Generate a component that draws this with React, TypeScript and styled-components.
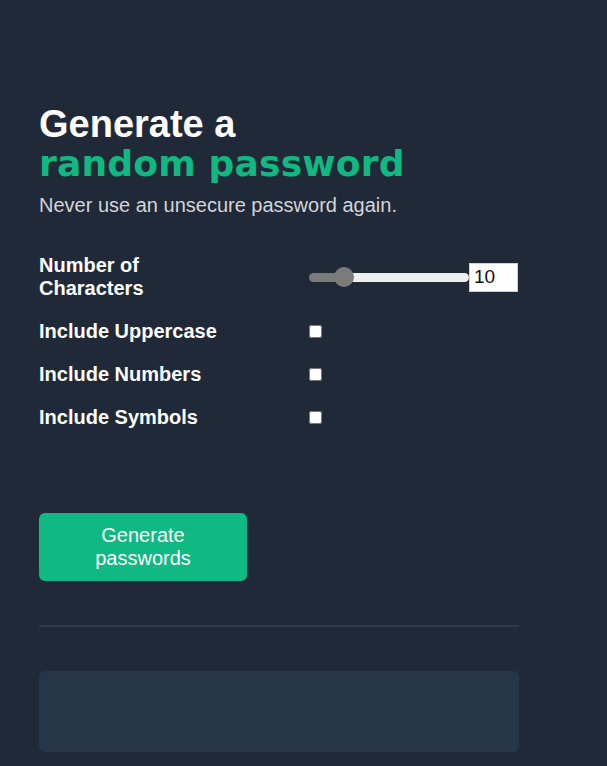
import { useState } from "react";
import styled, { createGlobalStyle } from "styled-components";

const GlobalStyle = createGlobalStyle`
  html, body {
    margin: 0;
    padding: 0;
    background: #1f2937;
  }

  body {
    font-family: "Liberation Sans", Arial, sans-serif;
    color: #ffffff;
  }
`;

const Page = styled.main`
  min-height: 766px;
  box-sizing: border-box;
  padding: 104px 0 0 39px;
  width: 519px;
`;

const Title = styled.h1`
  margin: 0;
  font-size: 38px;
  line-height: 40px;
  font-weight: 700;
  color: #ffffff;
`;

const Accent = styled.span`
  display: block;
  color: #10b981;
  font-family: "DejaVu Sans", Verdana, sans-serif;
  font-size: 36px;
  letter-spacing: 0.2px;
`;

const Subtitle = styled.p`
  margin: 9px 0 0;
  font-size: 20px;
  line-height: 24px;
  color: #d5d4d8;
`;

const Options = styled.div`
  margin-top: 37px;
  display: flex;
  flex-direction: column;
  gap: 20px;
`;

const OptionRow = styled.label`
  display: grid;
  grid-template-columns: 270px 1fr;
  align-items: center;
  min-height: 23px;
`;

const OptionLabel = styled.span<{ $narrow?: boolean }>`
  font-size: 20px;
  font-weight: 700;
  line-height: 23px;
  max-width: ${({ $narrow }) => ($narrow ? "130px" : "none")};
`;

const SliderGroup = styled.div`
  display: flex;
  align-items: center;
`;

const Range = styled.input`
  -webkit-appearance: none;
  appearance: none;
  width: 160px;
  height: 9px;
  margin: 0;
  border-radius: 5px;
  outline: none;

  &::-webkit-slider-thumb {
    -webkit-appearance: none;
    width: 20px;
    height: 20px;
    border-radius: 50%;
    background: #7b7b7b;
    cursor: pointer;
  }
`;

const NumberBox = styled.input`
  width: 49px;
  height: 29px;
  box-sizing: border-box;
  border: 1px solid #cfcfcf;
  background: #ffffff;
  color: #111111;
  font-family: "Liberation Sans", Arial, sans-serif;
  font-size: 19px;
  padding: 0 4px;
  margin: 0;
  outline: none;
  -moz-appearance: textfield;

  &::-webkit-inner-spin-button,
  &::-webkit-outer-spin-button {
    -webkit-appearance: none;
    margin: 0;
  }
`;

const Check = styled.input`
  width: 13px;
  height: 13px;
  margin: 0;
`;

const GenerateButton = styled.button`
  margin-top: 84px;
  width: 208px;
  height: 68px;
  border: none;
  border-radius: 6px;
  background: #10b981;
  color: #ffffff;
  font-family: "Liberation Sans", Arial, sans-serif;
  font-size: 20px;
  line-height: 23px;
  padding: 0 50px;
  cursor: pointer;
`;

const Divider = styled.hr`
  margin: 44px 0 0;
  border: none;
  height: 2px;
  background: #2f3a4a;
`;

const Output = styled.div`
  margin-top: 44px;
  height: 81px;
  border-radius: 6px;
  background: #273549;
`;

const MIN = 8;
const MAX = 19;

export default function App() {
  const [length, setLength] = useState(10);
  const [upper, setUpper] = useState(false);
  const [numbers, setNumbers] = useState(false);
  const [symbols, setSymbols] = useState(false);

  const pct = ((length - MIN) / (MAX - MIN)) * 100;

  return (
    <>
      <GlobalStyle />
      <Page>
        <Title>
          Generate a
          <Accent>random password</Accent>
        </Title>
        <Subtitle>Never use an unsecure password again.</Subtitle>

        <Options>
          <OptionRow as="div">
            <OptionLabel $narrow>Number of Characters</OptionLabel>
            <SliderGroup>
              <Range
                type="range"
                min={MIN}
                max={MAX}
                value={length}
                onChange={e => setLength(Number(e.target.value))}
                style={{
                  background: `linear-gradient(to right, #7b7b7b 0%, #7b7b7b ${pct}%, #efefef ${pct}%, #efefef 100%)`,
                }}
              />
              <NumberBox
                type="number"
                value={length}
                onChange={e => setLength(Number(e.target.value))}
              />
            </SliderGroup>
          </OptionRow>
          <OptionRow>
            <OptionLabel>Include Uppercase</OptionLabel>
            <Check type="checkbox" checked={upper} onChange={() => setUpper(v => !v)} />
          </OptionRow>
          <OptionRow>
            <OptionLabel>Include Numbers</OptionLabel>
            <Check type="checkbox" checked={numbers} onChange={() => setNumbers(v => !v)} />
          </OptionRow>
          <OptionRow>
            <OptionLabel>Include Symbols</OptionLabel>
            <Check type="checkbox" checked={symbols} onChange={() => setSymbols(v => !v)} />
          </OptionRow>
        </Options>

        <GenerateButton>Generate passwords</GenerateButton>
        <Divider />
        <Output />
      </Page>
    </>
  );
}
